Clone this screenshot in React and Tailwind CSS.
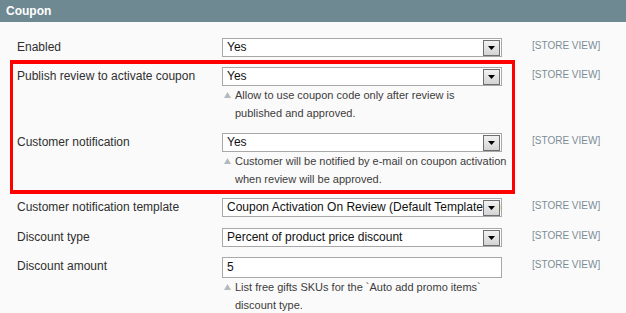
import React from "react";

const rows = [
  { label: "Enabled", value: "Yes", type: "select" },
  {
    label: "Publish review to activate coupon",
    value: "Yes",
    type: "select",
    note: ["Allow to use coupon code only after review is", "published and approved."],
    boxed: true,
  },
  {
    label: "Customer notification",
    value: "Yes",
    type: "select",
    note: ["Customer will be notified by e-mail on coupon activation", "when review will be approved."],
    boxed: true,
  },
  { label: "Customer notification template", value: "Coupon Activation On Review (Default Template from Locale)", type: "select" },
  { label: "Discount type", value: "Percent of product price discount", type: "select" },
  {
    label: "Discount amount",
    value: "5",
    type: "input",
    note: ["List free gifts SKUs for the `Auto add promo items`", "discount type."],
  },
];

const Arrow = () => (
  <div className="absolute right-[1px] top-[1px] w-[17px] h-[16px] border border-[#6e6e6e] bg-gradient-to-b from-[#f2f2f2] to-[#d4d4d4] flex items-center justify-center">
    <svg width="7" height="4" viewBox="0 0 7 4">
      <path d="M0 0h7L3.5 4z" fill="#000" />
    </svg>
  </div>
);

const Field = ({ row }) => (
  <div className="w-[280px] shrink-0">
    <div
      className={`relative bg-white border border-[#a8a8a8] pl-[4px] overflow-hidden whitespace-nowrap text-[12px] text-[#111] ${
        row.type === "input" ? "h-[21px] leading-[19px]" : "h-[19px] leading-[17px]"
      }`}
    >
      <span className="block overflow-hidden">{row.value}</span>
      {row.type === "select" && <Arrow />}
    </div>
    {row.note && (
      <div className="text-[11px] leading-[18px] text-[#3c3c3c] whitespace-nowrap">
        {row.note.map((line, i) => (
          <div key={i} className="flex items-center">
            <span className="w-[13px] shrink-0 pl-[2px] flex items-center">
              {i === 0 && (
                <svg width="7" height="6" viewBox="0 0 7 6">
                  <path d="M3.5 0L7 6H0z" fill="#b3b9bd" />
                </svg>
              )}
            </span>
            <span>{line}</span>
          </div>
        ))}
      </div>
    )}
  </div>
);

const Row = ({ row, className = "" }) => (
  <div className={`flex items-start ${className}`}>
    <div className="w-[222px] shrink-0 pl-[17px] text-[12px] leading-[19px] text-[#2f2f2f]">{row.label}</div>
    <Field row={row} />
    <div className="ml-[30px] shrink-0 whitespace-nowrap text-[10px] leading-[16px] text-[#7a8d97]">[STORE VIEW]</div>
  </div>
);

export default function App() {
  return (
    <div
      className="w-[626px] h-[313px] overflow-hidden bg-[#fafafa]"
      style={{ fontFamily: '"Liberation Sans", Arial, sans-serif' }}
    >
      <div className="h-[22px] bg-[#6f8992] px-[6px] text-white font-bold text-[12px] leading-[22px]">Coupon</div>
      <div className="pt-[16px]">
        <Row row={rows[0]} />
        <div className="relative mt-[10px]">
          <Row row={rows[1]} />
          <Row row={rows[2]} className="mt-[11px]" />
          <div className="absolute left-[10px] top-[-7px] bottom-[-6px] w-[505px] border-x-[3px] border-y-4 border-[#ff0000] pointer-events-none" />
        </div>
        <Row row={rows[3]} className="mt-[10px]" />
        <Row row={rows[4]} className="mt-[11px]" />
        <Row row={rows[5]} className="mt-[10px]" />
      </div>
    </div>
  );
}
